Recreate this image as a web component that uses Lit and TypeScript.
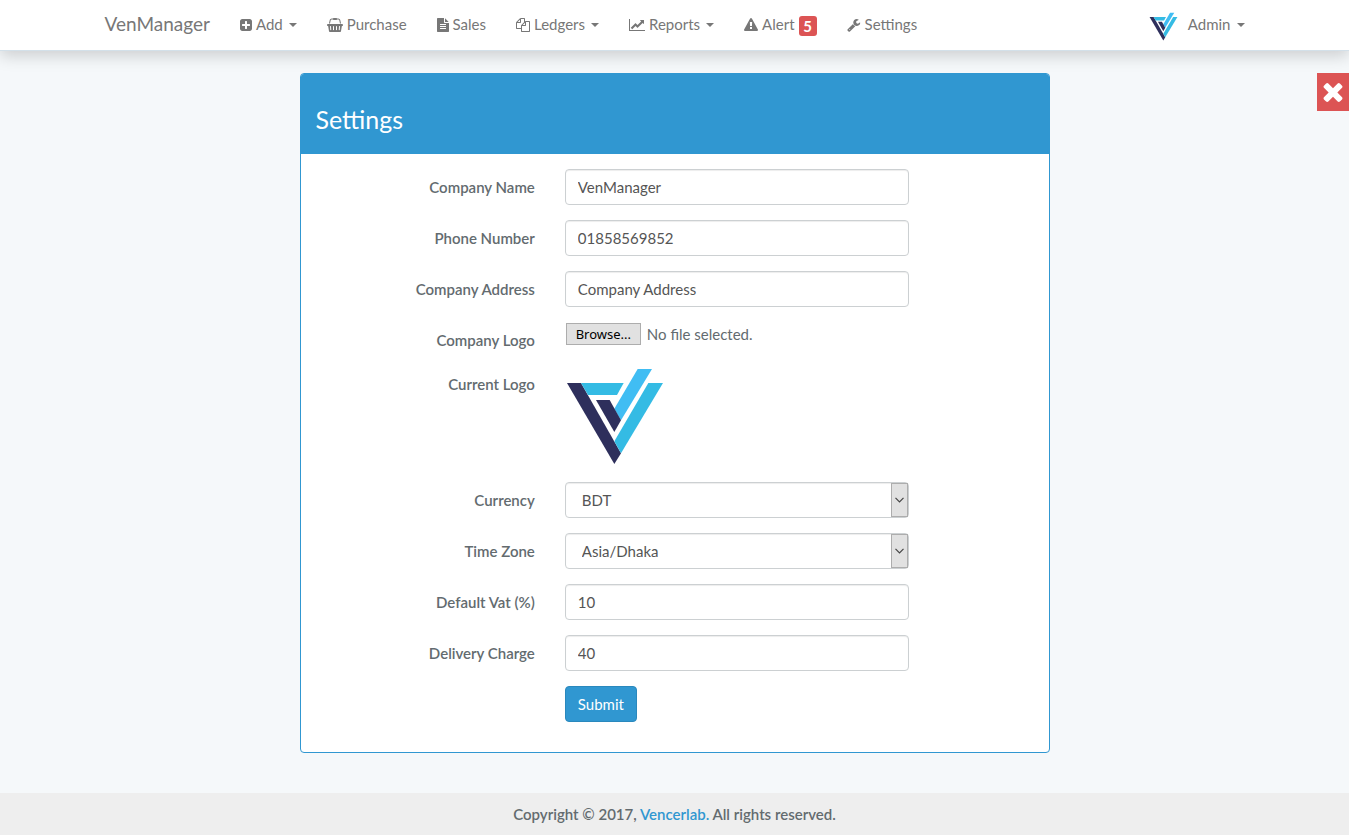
import { LitElement, html, css, svg, nothing } from "lit";
import { customElement, property } from "lit/decorators.js";

type Icon = { box: string; w: number; d: string };

const ICONS: Record<string, Icon> = {
  plus: {
    box: "128 0 1536 1792",
    w: 12,
    d: "M1408 960v-128q0-26-19-45t-45-19h-320v-320q0-26-19-45t-45-19h-128q-26 0-45 19t-19 45v320h-320q-26 0-45 19t-19 45v128q0 26 19 45t45 19h320v320q0 26 19 45t45 19h128q26 0 45-19t19-45v-320h320q26 0 45-19t19-45zm256-544v960q0 119-84.5 203.5t-203.5 84.5h-960q-119 0-203.500-84.500t-84.500-203.500v-960q0-119 84.500-203.500t203.500-84.500h960q119 0 203.500 84.500t84.500 203.500z",
  },
  basket: {
    box: "0 0 2048 1792",
    w: 16,
    d: "M1920 768q53 0 90.5 37.5t37.5 90.5-37.5 90.5-90.5 37.5h-15l-115 662q-8 46-44 76t-82 30h-1280q-46 0-82-30t-44-76l-115-662h-15q-53 0-90.5-37.5t-37.5-90.5 37.5-90.5 90.5-37.5h1792zm-1435 800q26-2 43.5-22.5t15.5-46.5l-32-416q-2-26-22.5-43.5t-46.5-15.5-43.5 22.5-15.5 46.5l32 416q2 25 20.500 42t43.500 17h5zm411-64v-416q0-26-19-45t-45-19-45 19-19 45v416q0 26 19 45t45 19 45-19 19-45zm384 0v-416q0-26-19-45t-45-19-45 19-19 45v416q0 26 19 45t45 19 45-19 19-45zm352 5l32-416q2-26-15.500-46.500t-43.500-22.500-46.500 15.500-22.500 43.500l-32 416q-2 26 15.500 46.500t43.500 22.500h5q25 0 43.500-17t20.500-42zm-1156-1217l-93 412h-132l101-441q19-88 89-143.500t160-55.500h167q0-26 19-45t45-19h384q26 0 45 19t19 45h167q90 0 160 55.500t89 143.500l101 441h-132l-93-412q-11-44-45.500-72t-79.500-28h-167q0 26-19 45t-45 19h-384q-26 0-45-19t-19-45h-167q-45 0-79.500 28t-45.500 72z",
  },
  file: {
    box: "128 0 1536 1792",
    w: 12,
    d: "M1596 476q14 14 28 36h-472v-472q22 14 36 28zm-476 164h544v1056q0 40-28 68t-68 28h-1344q-40 0-68-28t-28-68v-1600q0-40 28-68t68-28h800v544q0 40 28 68t68 28zm160 736v-64q0-14-9-23t-23-9h-704q-14 0-23 9t-9 23v64q0 14 9 23t23 9h704q14 0 23-9t9-23zm0-256v-64q0-14-9-23t-23-9h-704q-14 0-23 9t-9 23v64q0 14 9 23t23 9h704q14 0 23-9t9-23zm0-256v-64q0-14-9-23t-23-9h-704q-14 0-23 9t-9 23v64q0 14 9 23t23 9h704q14 0 23-9t9-23z",
  },
  files: {
    box: "0 0 1792 1792",
    w: 14,
    d: "M1696 384q40 0 68 28t28 68v1216q0 40-28 68t-68 28h-960q-40 0-68-28t-28-68v-288h-544q-40 0-68-28t-28-68v-672q0-40 20-88t48-76l408-408q28-28 76-48t88-20h416q40 0 68 28t28 68v328q68-40 128-40h416zm-544 213l-299 299h299v-299zm-640-384l-299 299h299v-299zm196 647l316-316v-416h-384v416q0 40-28 68t-68 28h-416v640h512v-256q0-40 20-88t48-76zm956 804v-1152h-384v416q0 40-28 68t-68 28h-416v640h896z",
  },
  chart: {
    box: "0 0 2048 1792",
    w: 16,
    d: "M2048 1536v128h-2048v-1536h128v1408h1920zm-128-1248v435q0 21-19.5 29.5t-35.5-7.5l-121-121-633 633q-10 10-23 10t-23-10l-233-233-416 416-192-192 585-585q10-10 23-10t23 10l233 233 464-464-121-121q-16-16-7.5-35.5t29.5-19.5h435q14 0 23 9t9 23z",
  },
  warning: {
    box: "0 0 1792 1792",
    w: 14,
    d: "M1024 1375v-190q0-14-9.5-23.5t-22.5-9.5h-192q-13 0-22.5 9.5t-9.5 23.5v190q0 14 9.5 23.5t22.5 9.5h192q13 0 22.5-9.5t9.5-23.5zm-2-374l18-459q0-12-10-19-13-11-24-11h-220q-11 0-24 11-10 7-10 21l17 457q0 10 10 16.5t24 6.5h185q14 0 23.500-6.500t10.500-16.500zm-14-934l768 1408q35 63-2 126-17 29-46.500 46t-63.500 17h-1536q-34 0-63.500-17t-46.500-46q-37-63-2-126l768-1408q17-31 47-49t65-18 65 18 47 49z",
  },
  wrench: {
    box: "64 0 1728 1792",
    w: 14,
    d: "M448 1472q0-26-19-45t-45-19-45 19-19 45 19 45 45 19 45-19 19-45zm644-420l-682 682q-37 37-90 37-52 0-91-37l-106-108q-38-36-38-90 0-53 38-91l681-681q39 98 114.500 173.500t173.500 114.500zm634-435q0 39-23 106-47 134-164.500 217.500t-258.500 83.500q-185 0-316.500-131.500t-131.500-316.500 131.500-316.500 316.500-131.500q58 0 121.500 16.500t107.500 46.500q16 11 16 28t-16 28l-293 169v224l193 107q5-3 79-48.500t135.500-81 70.500-35.500q15 0 23.500 10t8.500 25z",
  },
  times: {
    box: "302 302 1188 1252",
    w: 20,
    d: "M1490 1322q0 40-28 68l-136 136q-28 28-68 28t-68-28l-294-294-294 294q-28 28-68 28t-68-28l-136-136q-28-28-28-68t28-68l294-294-294-294q-28-28-28-68t28-68l136-136q28-28 68-28t68 28l294 294 294-294q28-28 68-28t68 28l136 136q28 28 28 68t-28 68l-294 294 294 294q28 28 28 68z",
  },
};

const icon = (name: string, height = 14) => {
  const i = ICONS[name];
  return html`<svg width=${i.w} height=${height} viewBox=${i.box} fill="currentColor" aria-hidden="true">
    ${svg`<path d=${i.d}></path>`}
  </svg>`;
};

@customElement("brand-logo")
export class BrandLogo extends LitElement {
  @property({ type: Number }) size = 100;

  static styles = css`
    :host { display: block; }
    svg { display: block; }
  `;

  render() {
    return html`<svg width=${this.size} height=${this.size} viewBox="495 168 300 300" role="img" aria-label="Company logo">
      <path fill="#2e2f5c" d="M501 219H543L663 430 643 462Z" />
      <path fill="#34bbe4" d="M543 219H671L651 255H564Z" />
      <path fill="#40bdf3" d="M713 177H756L663 331 643 296Z" />
      <path fill="#2e2f5c" d="M588 270H629L663 331 643 366Z" />
      <path fill="#34bbe4" d="M745 219H789L663 430 643 394Z" />
    </svg>`;
  }
}

interface NavEntry {
  icon: string;
  label: string;
  menu?: boolean;
  badge?: number;
}

const NAV: NavEntry[] = [
  { icon: "plus", label: "Add", menu: true },
  { icon: "basket", label: "Purchase" },
  { icon: "file", label: "Sales" },
  { icon: "files", label: "Ledgers", menu: true },
  { icon: "chart", label: "Reports", menu: true },
  { icon: "warning", label: "Alert", badge: 5 },
  { icon: "wrench", label: "Settings" },
];

@customElement("top-nav")
export class TopNav extends LitElement {
  static styles = css`
    :host { display: block; }
    .bar {
      background: #fff;
      border-bottom: 1px solid #d3e0e9;
      box-shadow: 0 5px 15px rgba(0, 0, 0, 0.17);
    }
    .inner {
      box-sizing: border-box;
      max-width: 1170px;
      min-height: 50px;
      margin: 0 auto;
      padding: 0 15px 2px;
      display: flex;
      align-items: center;
      justify-content: space-between;
    }
    .links { display: flex; align-items: center; gap: 30px; }
    a {
      display: flex;
      align-items: center;
      gap: 4px;
      color: #777;
      text-decoration: none;
      white-space: nowrap;
    }
    .brand { font-size: 19px; }
    a svg, .caret { margin-top: 2px; }
    .caret {
      margin-left: 2px;
      border: 4px solid transparent;
      border-top-color: currentColor;
      border-bottom: 0;
    }
    .badge {
      box-sizing: border-box;
      min-width: 18px;
      height: 20px;
      margin-top: 4px;
      border-radius: 3px;
      background: #dc5454;
      color: #fff;
      font-weight: 700;
      line-height: 20px;
      text-align: center;
    }
    .user brand-logo { margin: 4px 6px 0 0; }
  `;

  render() {
    return html`<nav class="bar">
      <div class="inner">
        <div class="links">
          <a class="brand" href="#">VenManager</a>
          ${NAV.map(
            (n) => html`<a href="#">
              ${icon(n.icon)}<span>${n.label}</span>
              ${n.menu ? html`<span class="caret"></span>` : nothing}
              ${n.badge ? html`<span class="badge">${n.badge}</span>` : nothing}
            </a>`
          )}
        </div>
        <a class="user" href="#"><brand-logo .size=${29}></brand-logo><span>Admin</span><span class="caret"></span></a>
      </div>
    </nav>`;
  }
}

@customElement("settings-panel")
export class SettingsPanel extends LitElement {
  static styles = css`
    :host { display: block; }
    .panel {
      border: 1px solid #3097d1;
      border-radius: 4px;
      background: #fff;
      overflow: hidden;
    }
    .head { background: #3097d1; color: #fff; padding: 31px 15px 21px; }
    h1 { margin: 0; font-size: 25px; line-height: 28px; font-weight: 400; }
    form { display: flex; flex-direction: column; gap: 15px; padding: 15px 0 30px; }
    .row { display: grid; grid-template-columns: 4fr 6fr 2fr; }
    .name {
      padding: 7px 15px 0;
      line-height: 22px;
      font-weight: 600;
      text-align: right;
    }
    .field { grid-column: 2; padding: 0 15px; min-width: 0; }
    .text, .choice {
      box-sizing: border-box;
      display: block;
      width: 100%;
      height: 36px;
      border: 1px solid #ccd0d2;
      border-radius: 4px;
      background: #fff;
      box-shadow: inset 0 1px 1px rgba(0, 0, 0, 0.075);
      color: #555;
      font: inherit;
    }
    .text { padding: 6px 12px; }
    .choice { appearance: none; padding: 6px 16px; }
    .select { position: relative; }
    .arrow {
      position: absolute;
      top: 1px;
      right: 1px;
      bottom: 1px;
      box-sizing: border-box;
      width: 17px;
      display: grid;
      place-items: center;
      border: 1px solid #adadad;
      background: #e1e1e1;
      pointer-events: none;
    }
    .upload { display: flex; align-items: center; gap: 6px; padding: 1px; }
    .upload:focus-within .browse { border-color: #3097d1; }
    .browse {
      box-sizing: border-box;
      width: 75px;
      height: 22px;
      border: 1px solid #adadad;
      background: #e1e1e1;
      color: #000;
      font: 13px/21px "Noto Sans", sans-serif;
      text-align: center;
    }
    .hidden {
      position: absolute;
      width: 1px;
      height: 1px;
      margin: 0;
      opacity: 0;
      overflow: hidden;
    }
    .preview { padding-bottom: 1px; }
    .submit {
      height: 36px;
      padding: 0 12px;
      border: 1px solid #2a88bd;
      border-radius: 4px;
      background: #3097d1;
      color: #fff;
      font: inherit;
    }
  `;

  private textRow(id: string, label: string, value: string) {
    return html`<div class="row">
      <label class="name" for=${id}>${label}</label>
      <div class="field"><input class="text" id=${id} type="text" .value=${value} /></div>
    </div>`;
  }

  private selectRow(id: string, label: string, value: string) {
    return html`<div class="row">
      <label class="name" for=${id}>${label}</label>
      <div class="field">
        <div class="select">
          <select class="choice" id=${id}><option>${value}</option></select>
          <span class="arrow">
            <svg width="9" height="6" viewBox="0 0 9 6" fill="none" stroke="#444" stroke-width="1.2"><path d="M.5.8 4.500 4.800 8.500.8" /></svg>
          </span>
        </div>
      </div>
    </div>`;
  }

  render() {
    return html`<section class="panel">
      <header class="head"><h1>Settings</h1></header>
      <form @submit=${(e: Event) => e.preventDefault()}>
        ${this.textRow("company", "Company Name", "VenManager")}
        ${this.textRow("phone", "Phone Number", "01858569852")}
        ${this.textRow("address", "Company Address", "Company Address")}
        <div class="row">
          <label class="name" for="logo">Company Logo</label>
          <div class="field">
            <div class="upload">
              <input class="hidden" id="logo" type="file" />
              <label class="browse" for="logo">Browse...</label>
              <span>No file selected.</span>
            </div>
          </div>
        </div>
        <div class="row">
          <span class="name">Current Logo</span>
          <div class="field"><brand-logo class="preview"></brand-logo></div>
        </div>
        ${this.selectRow("currency", "Currency", "BDT")}
        ${this.selectRow("zone", "Time Zone", "Asia/Dhaka")}
        ${this.textRow("vat", "Default Vat (%)", "10")}
        ${this.textRow("delivery", "Delivery Charge", "40")}
        <div class="row">
          <div class="field"><button class="submit" type="submit">Submit</button></div>
        </div>
      </form>
    </section>`;
  }
}

@customElement("app-root")
export class AppRoot extends LitElement {
  static styles = css`
    :host {
      display: flex;
      flex-direction: column;
      min-height: 100vh;
      background: #f5f8fa;
      color: #636b6f;
      font: 15px/22px Lato, "Open Sans", sans-serif;
    }
    main {
      flex: 1;
      box-sizing: border-box;
      width: 100%;
      max-width: 780px;
      margin: 0 auto;
      padding: 22px 15px 40px;
    }
    .close {
      position: fixed;
      top: 73px;
      right: 0;
      width: 32px;
      height: 38px;
      display: grid;
      place-items: center;
      padding: 0;
      border: 0;
      background: #dc5454;
      color: #fff;
    }
    footer { padding: 10px 15px; background: #eee; text-align: center; font-weight: 600; }
    footer a { color: #3097d1; text-decoration: none; }
  `;

  render() {
    return html`
      <top-nav></top-nav>
      <button class="close" type="button" aria-label="Close">${icon("times", 20)}</button>
      <main><settings-panel></settings-panel></main>
      <footer>Copyright © 2017, <a href="#">Vencerlab.</a> All rights reserved.</footer>
    `;
  }
}
